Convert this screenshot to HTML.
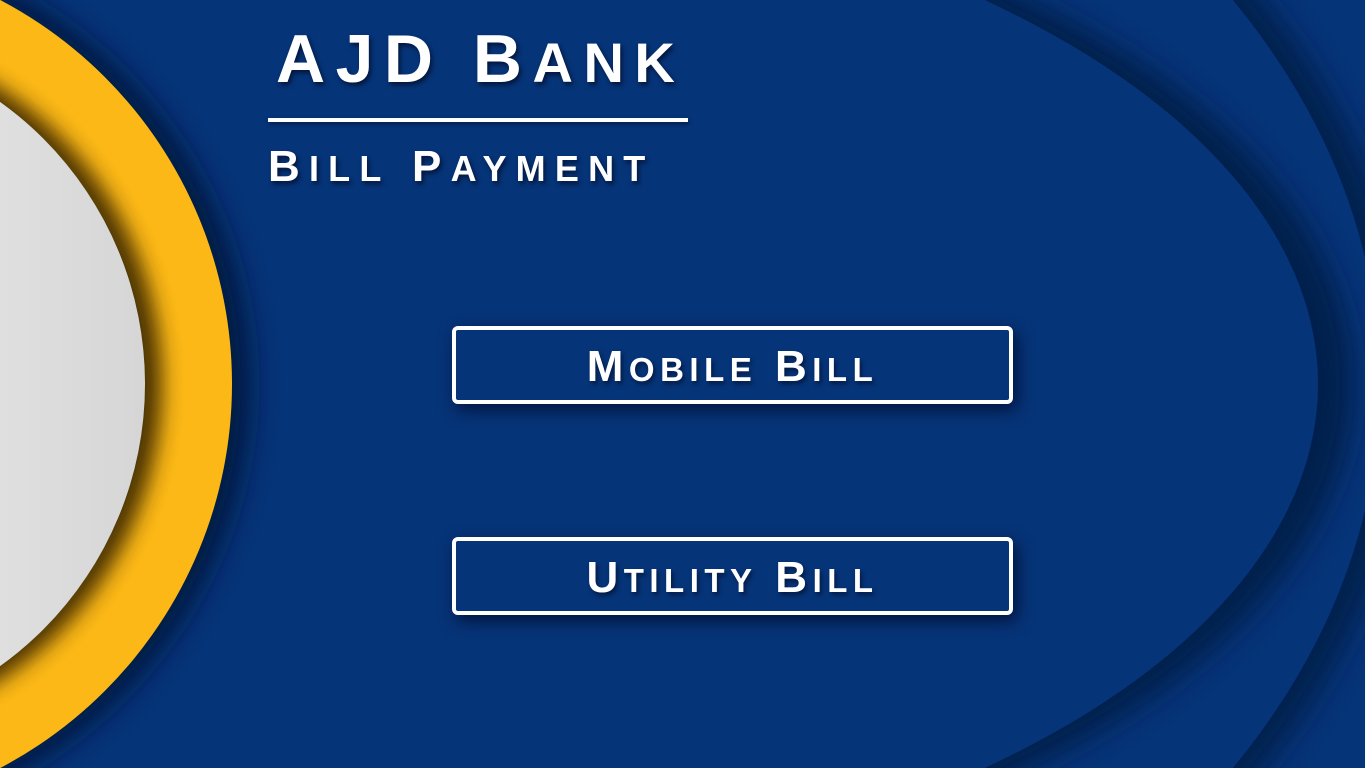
<!DOCTYPE html>
<html><head><meta charset="utf-8"><style>
html,body{margin:0;padding:0;width:1365px;height:768px;overflow:hidden;background:#063478;}
.bg{position:absolute;left:0;top:0}
.t{position:absolute;color:#fff;font-family:"Liberation Sans",sans-serif;font-weight:bold;white-space:nowrap;text-shadow:2px 3px 5px rgba(0,0,20,.6);}
.btn{position:absolute;left:452px;width:553px;height:70px;border:4px solid #fff;border-radius:6px;box-shadow:4px 6px 16px rgba(0,10,40,.75);background:#063478;overflow:hidden;}
.btn span.l{position:absolute;left:0;right:0;top:15px;text-align:center;color:#fff;font-family:"Liberation Sans",sans-serif;font-weight:bold;font-size:44px;line-height:44px;letter-spacing:5.5px;text-shadow:2px 3px 4px rgba(0,0,20,.5);white-space:nowrap;}
.s{font-size:33px}
</style></head><body>
<svg class="bg" width="1365" height="768" viewBox="0 0 1365 768">
<defs>
<filter id="sh" x="-20%" y="-20%" width="140%" height="140%"><feGaussianBlur stdDeviation="14"/></filter>
<filter id="sh2" x="-20%" y="-20%" width="140%" height="140%"><feGaussianBlur stdDeviation="10"/></filter>
<linearGradient id="wg" x1="0" x2="1" y1="0" y2="0"><stop offset="0" stop-color="#f3f3f3"/><stop offset="0.5" stop-color="#ececec"/><stop offset="1" stop-color="#d6d6d6"/></linearGradient>
</defs>
<rect width="1365" height="768" fill="#063478"/>
<ellipse cx="320" cy="384" rx="1090" ry="768" fill="#021a45" filter="url(#sh)" opacity=".8"/>
<ellipse cx="300" cy="384" rx="1080" ry="762" fill="#063478"/>
<ellipse cx="318" cy="384" rx="1035" ry="528" fill="#021a45" filter="url(#sh)" opacity=".85"/>
<ellipse cx="300" cy="384" rx="1018" ry="519" fill="#063478"/>
<circle cx="-190" cy="384" r="440" fill="#01143a" filter="url(#sh)" opacity=".9"/>
<circle cx="-202" cy="384" r="434" fill="#fbb816"/>
<circle cx="-190" cy="384" r="352" fill="#3a2800" filter="url(#sh2)" opacity=".9"/>
<circle cx="-202" cy="384" r="347" fill="url(#wg)"/>
</svg>
<div class="t" style="left:276px;top:25px;font-size:68px;line-height:68px;letter-spacing:10.5px;">AJD B<span style="font-size:56px">ANK</span></div>
<div style="position:absolute;left:268px;top:118px;width:420px;height:4px;background:#fff;box-shadow:1px 2px 4px rgba(0,0,20,.5)"></div>
<div class="t" style="left:268px;top:145px;font-size:44px;line-height:44px;letter-spacing:9.2px;">B<span style="font-size:36px">ILL</span> P<span style="font-size:36px">AYMENT</span></div>
<div class="btn" style="top:326px"><span class="l">M<span class="s">OBILE</span> B<span class="s">ILL</span></span></div>
<div class="btn" style="top:537px"><span class="l">U<span class="s">TILITY</span> B<span class="s">ILL</span></span></div>
</body></html>
